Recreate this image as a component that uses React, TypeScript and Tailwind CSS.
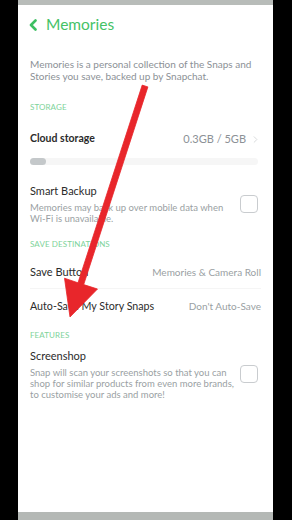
import { ChevronRight } from "lucide-react";

const font = { fontFamily: "Lato, 'Liberation Sans', sans-serif" };

function SectionLabel({ children }: { children: string }) {
  return <p className="text-[8px] leading-[10px] uppercase tracking-[0.1px] text-[#7ed39a]">{children}</p>;
}

function Checkbox() {
  return <div className="h-[18px] w-[18px] shrink-0 rounded-[4px] border border-[#c9cccf]" />;
}

export default function App() {
  return (
    <div className="relative flex h-[520px] w-[292px] overflow-hidden bg-black" style={font}>
      <div className="w-[18px] shrink-0" />
      <div className="flex w-[255px] flex-col">
        <div className="h-[5px] bg-[#b8bcb9]" />
        <div className="flex flex-1 flex-col bg-white pl-[12px] pr-[12px]">
          {/* header */}
          <div className="mt-[10px] flex h-[20px] items-center">
            <svg width="8" height="12" viewBox="0 0 8 12" className="-ml-[1px]">
              <polyline points="6.5,1.5 2,6 6.5,10.5" fill="none" stroke="#3dbf62" strokeWidth="2.6" strokeLinecap="round" strokeLinejoin="round" />
            </svg>
            <span className="ml-[9px] text-[15.5px] leading-none text-[#45c266]">Memories</span>
          </div>

          <p className="mt-[23px] text-[10px] leading-[12px] text-[#8c9196]">
            Memories is a personal collection of the Snaps and Stories you save, backed up by Snapchat.
          </p>

          <div className="mt-[20px]">
            <SectionLabel>Storage</SectionLabel>
          </div>

          <div className="mt-[20px] flex h-[14px] items-center justify-between">
            <span className="text-[10.5px] font-bold text-[#2b2b2b]">Cloud storage</span>
            <div className="flex items-center gap-[4px] text-[11px] text-[#8c9196]">
              <span>0.3GB / 5GB</span>
              <ChevronRight size={11} strokeWidth={1.5} className="text-[#c7cacc]" />
            </div>
          </div>

          <div className="mt-[12px] h-[7px] w-[228px] rounded-full bg-[#f6f6f6]">
            <div className="h-[7px] w-[16px] rounded-full bg-[#c4c8ca]" />
          </div>

          <div className="mt-[19px] flex items-start justify-between">
            <div>
              <p className="text-[11px] leading-[14px] text-[#2b2b2b]">Smart Backup</p>
              <p className="mt-[4px] whitespace-nowrap text-[9.5px] leading-[11px] text-[#9a9fa3]">
                Memories may back up over mobile data when
                <br />
                Wi-Fi is unavailable.
              </p>
            </div>
            <div className="mr-[3px] mt-[11px]">
              <Checkbox />
            </div>
          </div>

          <div className="mt-[15px]">
            <SectionLabel>Save Destinations</SectionLabel>
          </div>

          <div className="mt-[16px] flex h-[24px] items-start justify-between border-b border-[#f5f5f5]">
            <span className="text-[11px] leading-[14px] text-[#2b2b2b]">Save Button</span>
            <span className="text-[10px] leading-[14px] text-[#9a9fa3]">Memories &amp; Camera Roll</span>
          </div>

          <div className="mt-[10px] flex h-[14px] items-center justify-between">
            <span className="text-[10.7px] leading-[14px] text-[#2b2b2b]">Auto-Save My Story Snaps</span>
            <span className="text-[10px] leading-[14px] text-[#9a9fa3]">Don't Auto-Save</span>
          </div>

          <div className="mt-[17px]">
            <SectionLabel>Features</SectionLabel>
          </div>

          <div className="mt-[9px] flex items-start justify-between">
            <div>
              <p className="text-[11px] leading-[14px] text-[#2b2b2b]">Screenshop</p>
              <p className="mt-[4px] whitespace-nowrap text-[9.5px] leading-[11px] text-[#9a9fa3]">
                Snap will scan your screenshots so that you can
                <br />
                shop for similar products from even more brands,
                <br />
                to customise your ads and more!
              </p>
            </div>
            <div className="mr-[3px] mt-[16px]">
              <Checkbox />
            </div>
          </div>
        </div>
        <div className="h-[8px] bg-[#b4b8b5]" />
      </div>
      <div className="w-[19px] shrink-0" />

      {/* red annotation arrow, drawn over the list */}
      <svg
        className="pointer-events-none absolute left-0 top-0"
        width="292"
        height="330"
        viewBox="0 0 292 330"
      >
        <path
          d="M142.2 85.1 L147.9 86.9 L83.7 284.6 L97.5 289 L70 317 L64.5 278.2 L78 282.8 Z"
          fill="#e8262b"
          stroke="#e8262b"
          strokeWidth="0.8"
          strokeLinejoin="round"
        />
      </svg>
    </div>
  );
}
